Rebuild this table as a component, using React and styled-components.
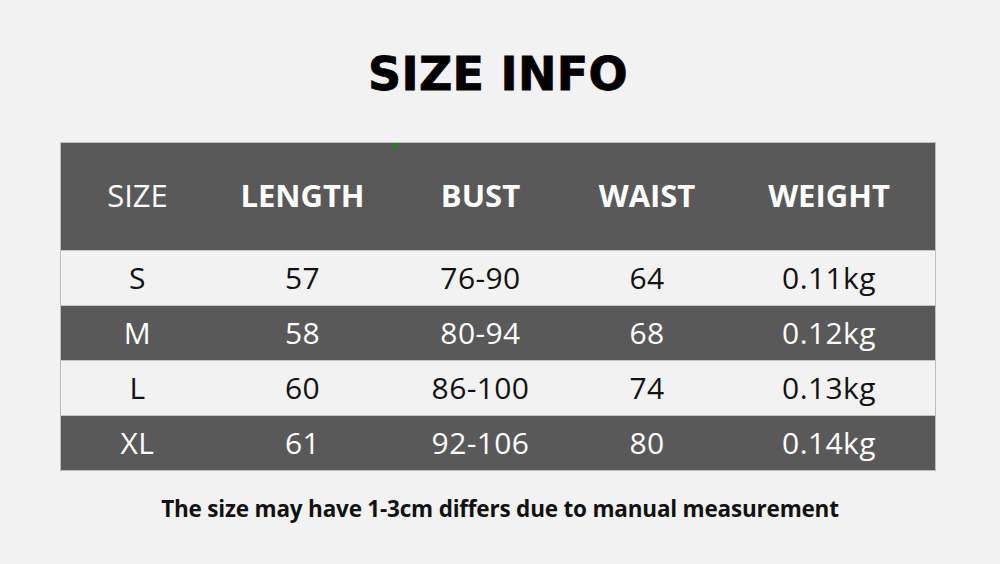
import React from 'react';
import styled, { createGlobalStyle } from 'styled-components';

const GlobalStyle = createGlobalStyle`
  html, body {
    margin: 0;
    padding: 0;
    background: #f2f2f2;
  }
`;

const Page = styled.div`
  width: 1000px;
  height: 564px;
  background: #f2f2f2;
  display: flex;
  flex-direction: column;
  align-items: center;
  box-sizing: border-box;
  padding-top: 48px;
  font-family: 'Open Sans', 'Liberation Sans', sans-serif;
`;

const Title = styled.h1`
  margin: 0 4px 0 0;
  height: 52px;
  line-height: 52px;
  font-family: 'DejaVu Sans', sans-serif;
  font-weight: 700;
  font-size: 46px;
  letter-spacing: 0.3px;
  color: #000;
  -webkit-text-stroke: 0.8px #000;
`;

const Table = styled.div`
  position: relative;
  box-sizing: border-box;
  margin: 42px 5px 0 0;
  width: 876px;
  border: 1px solid #bdbdbd;
  display: flex;
  flex-direction: column;
`;

const Row = styled.div`
  display: grid;
  grid-template-columns: 154px 176px 180px 153px 1fr;
  align-items: center;
  height: ${(p) => (p.$header ? '107px' : '54px')};
  background: ${(p) => (p.$dark ? '#595959' : '#f2f2f2')};
  color: ${(p) => (p.$dark ? '#ffffff' : '#111111')};
  & + & {
    border-top: 1px solid #c4c4c4;
  }
`;

const Cell = styled.div`
  text-align: center;
  font-size: ${(p) => (p.$header ? '31px' : '30px')};
  font-weight: ${(p) => (p.$bold ? 700 : 400)};
  letter-spacing: ${(p) => (p.$header ? '0px' : '0.4px')};
  padding-bottom: ${(p) => (p.$header ? '4px' : '2px')};
`;

const Marker = styled.span`
  position: absolute;
  top: 0;
  left: 332px;
  width: 0;
  height: 0;
  border-top: 8px solid #1a8a1a;
  border-right: 6px solid transparent;
`;

const Note = styled.p`
  margin: 22px 0 0;
  font-size: 22.5px;
  font-weight: 700;
  color: #111;
  letter-spacing: -0.2px;
`;

const headers = ['SIZE', 'LENGTH', 'BUST', 'WAIST', 'WEIGHT'];

const rows = [
  ['S', '57', '76-90', '64', '0.11kg'],
  ['M', '58', '80-94', '68', '0.12kg'],
  ['L', '60', '86-100', '74', '0.13kg'],
  ['XL', '61', '92-106', '80', '0.14kg'],
];

export default function App() {
  return (
    <>
      <GlobalStyle />
      <Page>
        <Title>SIZE INFO</Title>
        <Table>
          <Marker />
          <Row $header $dark>
            {headers.map((h, i) => (
              <Cell key={h} $header $bold={i > 0}>
                {h}
              </Cell>
            ))}
          </Row>
          {rows.map((r, idx) => (
            <Row key={r[0]} $dark={idx % 2 === 1}>
              {r.map((v, i) => (
                <Cell key={i}>{v}</Cell>
              ))}
            </Row>
          ))}
        </Table>
        <Note>The size may have 1-3cm differs due to manual measurement</Note>
      </Page>
    </>
  );
}
